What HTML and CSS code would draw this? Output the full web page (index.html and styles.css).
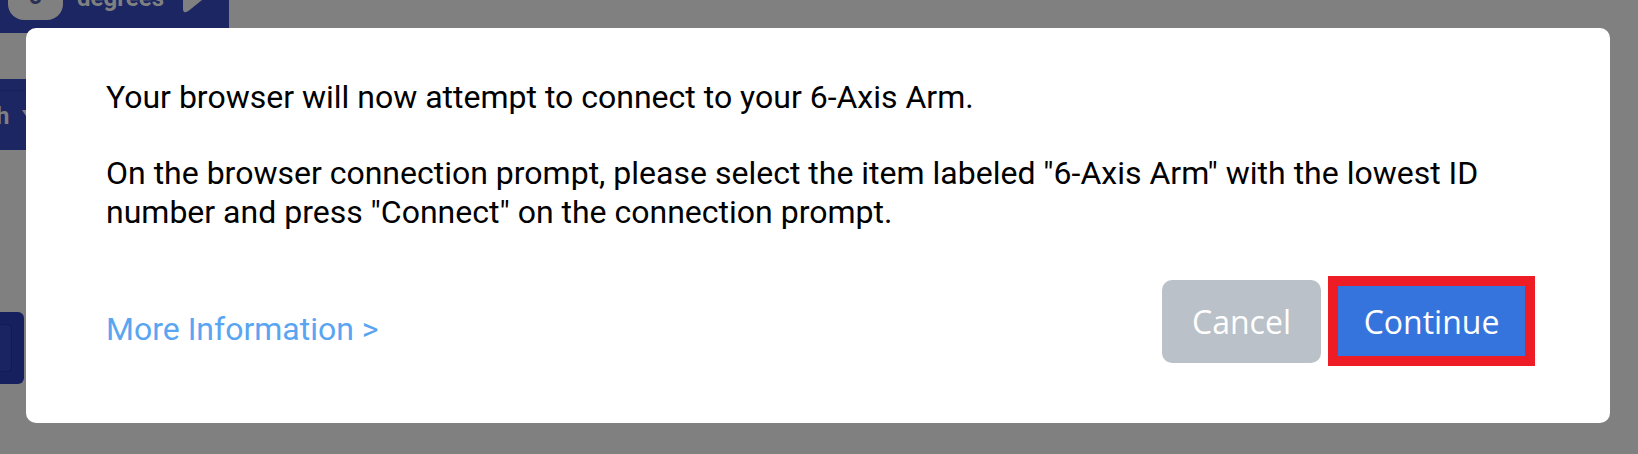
FILE: index.html
```html
<!DOCTYPE html>
<html lang="en">
<head>
<meta charset="utf-8">
<title>Connect</title>
<link rel="stylesheet" href="styles.css">
</head>
<body>
<div class="behind">
  <div class="panel panel-top">
    <span class="pill">0</span>
    <span class="unit">degrees</span>
    <svg class="pencil" width="26" height="14" viewBox="0 0 26 14"><path d="M2 0H21L8 10.5Q5 12.8 3.2 12Q2 11.4 2 9Z" fill="#808080"/></svg>
  </div>
  <div class="panel panel-mid"><span class="mid-text">h</span><span class="caret"></span></div>
  <div class="panel panel-low"><div class="panel-inner"></div></div>
</div>
<div class="modal">
  <div class="copy">
    <p class="para">Your browser will now attempt to connect to your 6-Axis Arm.</p>
    <p class="para">On the browser connection prompt, please select the item labeled "6-Axis Arm" with the lowest ID number and press "Connect" on the connection prompt.</p>
  </div>
  <div class="foot">
    <a class="more" href="#">More Information &gt;</a>
    <div class="actions">
      <button class="btn cancel">Cancel</button>
      <span class="highlight"><button class="btn go">Continue</button></span>
    </div>
  </div>
</div>
</body>
</html>
```
FILE: styles.css
```css
html, body { margin: 0; height: 454px; overflow: hidden; background: #808080; font-family: Roboto, sans-serif; }
body { position: relative; }
.behind { position: absolute; inset: 0; }
.panel { position: absolute; left: 0; background: #1b2663; box-sizing: border-box; }
.panel-top { top: 0; width: 229px; height: 33px; overflow: hidden; }
.pill { position: absolute; left: 8px; top: -30px; width: 55px; height: 50px; background: #808080; border-radius: 16px; color: #2a2f55; font: 700 24px/1 Roboto, sans-serif; display: flex; align-items: flex-end; justify-content: center; padding-bottom: 12px; box-sizing: border-box; }
.unit { position: absolute; left: 77px; top: -16px; color: #808080; font: 700 24px/28px Roboto, sans-serif; }
.pencil { position: absolute; left: 181px; top: 0; }
.panel-mid { top: 79px; width: 26px; height: 71px; }
.panel-mid::before { content: ""; position: absolute; left: 0; right: 0; top: 11px; height: 1px; background: #182258; }
.mid-text { position: absolute; left: -4px; top: 23px; color: #808080; font: 700 24px/28px Roboto, sans-serif; }
.caret { position: absolute; left: 22px; top: 31px; border: 4px solid transparent; border-top: 6px solid #808080; }
.panel-low { top: 312px; width: 24px; height: 72px; border-radius: 0 6px 6px 0; background: #16205f; }
.panel-inner { position: absolute; left: -8px; top: 12px; width: 20px; height: 48px; border: 1px solid #121a50; border-radius: 5px; background: #1a2463; box-sizing: border-box; }
.modal { position: absolute; left: 26px; top: 28px; width: 1584px; height: 395px; background: #fff; border-radius: 10px; box-sizing: border-box; padding: 50px 81px 0 80px; display: flex; flex-direction: column; }
.copy { width: 1400px; color: #000; font-size: 32px; line-height: 39px; }
.para { margin: 0 0 37px; }
.para:last-child { margin-bottom: 0; }
.foot { display: flex; justify-content: space-between; align-items: center; margin-top: 44px; margin-right: -6px; }
.more { color: #5aa5f2; font-size: 32px; line-height: 38px; text-decoration: none; position: relative; top: 8px; }
.actions { display: flex; align-items: center; gap: 7px; }
.btn { border: 0; color: #fff; font: 32px "Open Sans", sans-serif; padding: 0; }
.cancel { width: 159px; height: 83px; background: #bac1c8; border-radius: 10px; }
.highlight { display: block; border: 10px solid #ee1c25; }
.go { display: block; width: 187px; height: 70px; background: #3674dd; }
```
